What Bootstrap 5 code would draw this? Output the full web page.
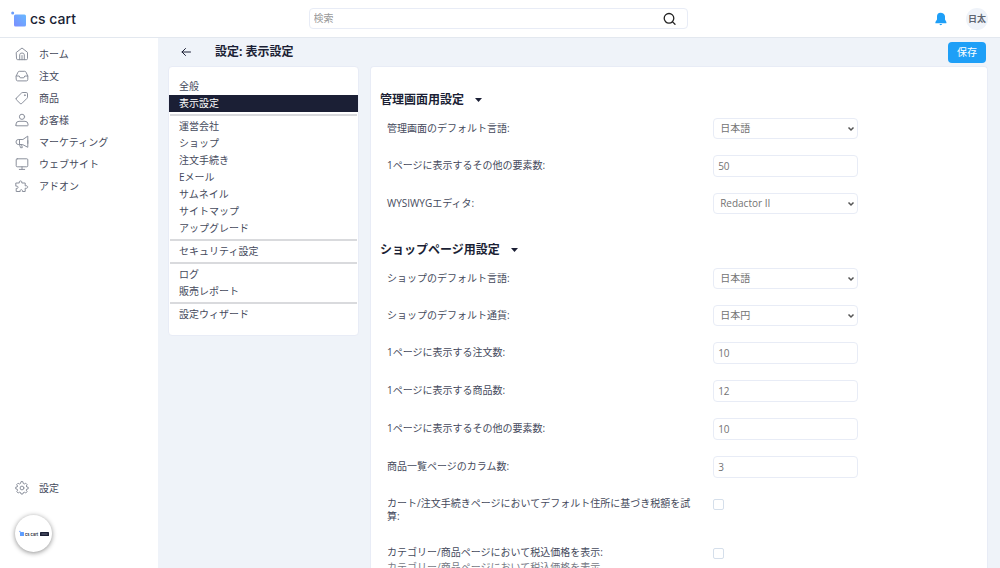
<!DOCTYPE html>
<html lang="ja">
<head>
<meta charset="utf-8">
<meta name="viewport" content="width=device-width, initial-scale=1">
<title>設定: 表示設定</title>
<link href="https://cdn.jsdelivr.net/npm/bootstrap@5.3.0/dist/css/bootstrap.min.css" rel="stylesheet">
<style>
  :root { --ink: #1b1f35; --line: #e8ecf6; --page: #eff3f9; --blue: #1e9ff7; }
  body { font-family: "Open Sans", "Noto Sans CJK JP", sans-serif; font-size: 10px; line-height: 13px; color: #454a5c; background: var(--page); }
  a { color: inherit; text-decoration: none; }
  .topbar { height: 38px; border-bottom: 1px solid #e3e8ef; padding: 0 12px 0 8px; }
  .topbar-side { flex: 1 1 0; }
  .brand { gap: 4px; padding: 3px 0 0 3px; }
  .brand-text { font-family: Inter, sans-serif; font-size: 14px; line-height: 16px; font-weight: 500; color: var(--ink); }
  .search-box { flex: 0 1 379px; height: 21px; border: 1px solid var(--line); border-radius: 4px; background: #fff; }
  .search-box input { outline: 0; color: #555; padding: 0 4px; }
  .search-box input::placeholder { color: #999; }
  .bell { margin-right: 13px; }
  .avatar { width: 22px; height: 22px; background: var(--page); color: #5f6672; font-size: 9px; font-weight: 700; }
  .sidebar { width: 158px; padding: 5px 0 16px 15px; }
  .side-link { height: 22px; gap: 10px; }
  .side-link svg { width: 14px; height: 14px; fill: none; stroke: #8b909c; stroke-width: 1; stroke-linecap: round; stroke-linejoin: round; }
  .help-bubble { width: 37px; height: 37px; box-shadow: 0 1px 5px rgba(0,0,0,.45); margin-top: 16px; }
  .work { padding: 0 12px 0 10px; }
  .toolbar { height: 28px; flex: none; }
  .page-title { font-size: 12px; line-height: 16px; font-weight: 700; color: var(--ink); margin: 0 0 0 23px; }
  .save-btn { height: 21px; width: 38px; font-size: 10px; line-height: 13px; padding: 0; background: var(--blue); color: #fff; border-radius: 4px; margin-right: 2px; }
  .save-btn:hover { background: #1389dd; color: #fff; }
  .panel { background: #fff; border: 1px solid var(--line); border-radius: 4px; }
  .settings-nav { width: 191px; padding: 11px 0 12px; }
  .settings-nav a { display: block; height: 17px; line-height: 17px; padding: 0 10px; }
  .settings-nav a.current { background: var(--ink); color: #fff; }
  .settings-nav hr { margin: 2px 1px; border: 0; height: 2px; background: #d9dadd; opacity: 1; }
  .options { padding: 25px 7px 0 9px; margin-left: 11px; border-radius: 4px 4px 0 0; }
  .group-title { font-size: 12px; line-height: 16px; font-weight: 700; color: var(--ink); margin: 0; }
  .group-title button { font: inherit; color: inherit; background: none; border: 0; padding: 0; gap: 11px; }
  .fields { display: grid; gap: 16px; padding: 10px 0 0 7px; margin-bottom: 28px; }
  .field-row { display: flex; align-items: flex-start; }
  .field-row label { width: 55%; padding: 4px 16px 0 0; }
  .field-row small { font-size: 10px; display: block; color: #777b86; line-height: 15px; margin-top: 1px; }
  .ctl { width: 145px; border: 1px solid var(--line); border-radius: 4px; background: #fff; color: #737373; font-size: 10px; line-height: 13px; }
  input.ctl { height: 22px; padding: 0 4px; }
  select.ctl { height: 21px; padding: 0 14px 0 6px; appearance: none; background: #fff url("data:image/svg+xml,%3Csvg xmlns='http://www.w3.org/2000/svg' viewBox='0 0 8 6'%3E%3Cpath d='M1.500 1.500 4 4 6.500 1.500' fill='none' stroke='%23555' stroke-width='1.500'/%3E%3C/svg%3E") no-repeat right 2px center / 8px 6px; }
  .field-row.checks { padding-bottom: 4px; }
  .field-row.checks label { padding-top: 3px; }
  .field-row .form-check-input { width: 11px; height: 11px; margin: 5px 0 0; border-color: #d5dfeb; border-radius: 2px; }
</style>
</head>
<body class="vh-100 d-flex flex-column overflow-hidden">
<header class="topbar bg-white d-flex align-items-center flex-shrink-0">
  <div class="topbar-side">
    <a href="#" class="brand d-inline-flex align-items-center">
      <svg width="15" height="16" viewBox="0 0 15 16" aria-hidden="true">
        <defs><linearGradient id="logoFill" x1="1" y1="0" x2="0" y2="1"><stop offset="0" stop-color="#67b9ff"/><stop offset="1" stop-color="#7b8dff"/></linearGradient></defs>
        <rect x="3" y="3.5" width="12" height="12" rx="1.5" fill="url(#logoFill)"/><circle cx="1.7" cy="2" r="1.5" fill="#6a9dfb"/>
      </svg>
      <span class="brand-text">cs cart</span>
    </a>
  </div>
  <form class="search-box d-flex align-items-center">
    <input type="search" class="border-0 bg-transparent flex-grow-1" placeholder="検索" aria-label="検索">
    <button type="submit" class="border-0 bg-transparent p-0 me-2 d-flex" aria-label="検索する">
      <svg width="18" height="14" viewBox="0 0 18 14" fill="none" stroke="#222" stroke-width="1.3" stroke-linecap="round"><circle cx="8" cy="6.3" r="4.800"/><path d="M11.600 9.900 14 12.200"/></svg>
    </button>
  </form>
  <div class="topbar-side d-flex justify-content-end align-items-center">
    <button type="button" class="bell border-0 bg-transparent p-0 d-flex" aria-label="通知">
      <svg width="16" height="14" viewBox="0 0 16 14" fill="#1e9ff7"><path d="M7.500.8C5.200.8 4 2.400 4 4.500v3L2.400 10v1.200h11V10L12 7.500v-3C12 2.400 9.800.8 7.500.8ZM6.500 12c.2 1.500 2.300 1.500 2.600 0Z"/></svg>
    </button>
    <a href="#" class="avatar rounded-circle d-flex align-items-center justify-content-center ms-1 text-nowrap">日太</a>
  </div>
</header>

<div class="d-flex flex-grow-1 overflow-hidden">
  <nav class="sidebar bg-white d-flex flex-column flex-shrink-0" aria-label="メイン">
    <a href="#" class="side-link d-flex align-items-center"><svg viewBox="0 0 14 14"><path d="M1.500 5.300 7 1l5.500 4.300v6.200q0 1.200-1.200 1.200H2.700q-1.200 0-1.200-1.200ZM4.700 12.700V7.800Q4.700 6 7 6t2.300 1.800v4.900M7 8.500v4.200"/></svg>ホーム</a>
    <a href="#" class="side-link d-flex align-items-center"><svg viewBox="0 0 14 14"><path d="M1.200 7 3 3.200Q3.400 2.300 4.300 2.300h5.400q.9 0 1.300.9L12.800 7v3.500q0 1.400-1.400 1.400H2.600q-1.400 0-1.400-1.400ZM1.200 7h3l1 1.800h3.600l1-1.800h3"/></svg>注文</a>
    <a href="#" class="side-link d-flex align-items-center"><svg viewBox="0 0 14 14"><path d="M1.300 7.200 6.500 2Q7 1.500 8 1.500h3.200q1.300 0 1.300 1.300V6q0 .8-.6 1.400l-5.100 5.100q-.8.700-1.600 0L1.300 8.700q-.7-.8 0-1.500Z"/><circle cx="9.800" cy="4.200" r=".4"/></svg>商品</a>
    <a href="#" class="side-link d-flex align-items-center"><svg viewBox="0 0 14 14"><circle cx="7" cy="3.800" r="2.600"/><path d="M1 12.300V11Q1.200 8.300 4 8.300h6q2.800 0 3 2.700v1.300q0 .5-.5.500h-11q-.5 0-.5-.5Z"/></svg>お客様</a>
    <a href="#" class="side-link d-flex align-items-center"><svg viewBox="0 0 14 14"><path d="M12.800 1.500v10.800L7.500 9.500H3.200Q1 9.300 1 7t2.200-2.500h4.300ZM4.500 4.500v5l1 3.200h1.800l-.7-3.200M12.800 5.700v2.600"/></svg>マーケティング</a>
    <a href="#" class="side-link d-flex align-items-center"><svg viewBox="0 0 14 14"><rect x="1.200" y="1.800" width="11.600" height="8" rx="1"/><path d="M7 9.800v2.500M4.300 12.400h5.400"/></svg>ウェブサイト</a>
    <a href="#" class="side-link d-flex align-items-center"><svg viewBox="0 0 14 14"><path d="M1.200 4h3.100c-1-2.600 3.400-2.900 2.500 0h3.400v2.900c3.200-1.100 3.500 3.200 0 2.300v3.300H7.400c.6-2.500-2.800-2.500-2.200 0h-4V9.400c2.600.6 2.600-2.900 0-2.300Z"/></svg>アドオン</a>
    <a href="#" class="side-link d-flex align-items-center mt-auto"><svg viewBox="0 0 14 14"><circle cx="7" cy="7" r="1.900"/><path d="m5.900 1-.4 1.500-1 .5-1.400-.8-1.400 1.400.8 1.400-.4 1L.7 6.200v1.600l1.500.4.400 1-.8 1.400 1.400 1.400 1.400-.8 1 .4.400 1.400h1.900l.4-1.400 1-.4 1.400.8 1.400-1.400-.8-1.400.4-1 1.500-.4V6.200L11.800 6l-.5-1 .8-1.400-1.400-1.400-1.400.8-1-.5L7.900 1Z"/></svg>設定</a>
    <button type="button" class="help-bubble rounded-circle border-0 bg-white p-0 d-flex align-items-center justify-content-center" aria-label="ヘルプ">
      <svg width="30" height="8" viewBox="0 0 30 8"><circle cx=".9" cy="1.500" r=".7" fill="#6a9dfb"/><rect x="1" y="2" width="4" height="4" rx=".5" fill="#5d9dff"/><text x="6" y="5.800" font-family="Inter, sans-serif" font-size="4" font-weight="600" fill="#1b1f35">cs cart</text><rect x="21" y="2" width="9" height="4" rx=".6" fill="#1b1f35"/><path d="M22.500 4h6" stroke="#777b8d" stroke-width=".8"/></svg>
    </button>
  </nav>

  <main class="work d-flex flex-column flex-grow-1">
    <div class="toolbar d-flex align-items-center">
      <a href="#" class="d-flex ms-2 ps-1" aria-label="戻る"><svg width="12" height="10" viewBox="0 0 12 10" fill="none" stroke="#1b1f35" stroke-width="1" stroke-linecap="round" stroke-linejoin="round"><path d="M10.500 5H2M5.500 1.500 2 5l3.500 3.500"/></svg></a>
      <h1 class="page-title">設定: 表示設定</h1>
      <button type="button" class="btn save-btn ms-auto border-0">保存</button>
    </div>
    <div class="d-flex flex-grow-1 align-items-start">
      <nav class="panel settings-nav flex-shrink-0" aria-label="設定">
        <a href="#">全般</a>
        <a href="#" class="current" aria-current="page">表示設定</a>
        <hr>
        <a href="#">運営会社</a>
        <a href="#">ショップ</a>
        <a href="#">注文手続き</a>
        <a href="#">Eメール</a>
        <a href="#">サムネイル</a>
        <a href="#">サイトマップ</a>
        <a href="#">アップグレード</a>
        <hr>
        <a href="#">セキュリティ設定</a>
        <hr>
        <a href="#">ログ</a>
        <a href="#">販売レポート</a>
        <hr>
        <a href="#">設定ウィザード</a>
      </nav>
      <form class="panel options flex-grow-1 align-self-stretch border-bottom-0">
        <h2 class="group-title"><button type="button" class="d-flex align-items-center">管理画面用設定 <svg width="7" height="4" viewBox="0 0 7 4"><path d="M0 0h7L3.500 4Z" fill="#1b1f35"/></svg></button></h2>
        <div class="fields">
          <div class="field-row"><label for="adminLang">管理画面のデフォルト言語:</label><select id="adminLang" class="ctl"><option>日本語</option></select></div>
          <div class="field-row"><label for="adminItems">1ページに表示するその他の要素数:</label><input id="adminItems" class="ctl" type="text" value="50"></div>
          <div class="field-row"><label for="editor">WYSIWYGエディタ:</label><select id="editor" class="ctl"><option>Redactor II</option></select></div>
        </div>
        <h2 class="group-title"><button type="button" class="d-flex align-items-center">ショップページ用設定 <svg width="7" height="4" viewBox="0 0 7 4"><path d="M0 0h7L3.500 4Z" fill="#1b1f35"/></svg></button></h2>
        <div class="fields">
          <div class="field-row"><label for="shopLang">ショップのデフォルト言語:</label><select id="shopLang" class="ctl"><option>日本語</option></select></div>
          <div class="field-row"><label for="currency">ショップのデフォルト通貨:</label><select id="currency" class="ctl"><option>日本円</option></select></div>
          <div class="field-row"><label for="orders">1ページに表示する注文数:</label><input id="orders" class="ctl" type="text" value="10"></div>
          <div class="field-row"><label for="products">1ページに表示する商品数:</label><input id="products" class="ctl" type="text" value="12"></div>
          <div class="field-row"><label for="shopItems">1ページに表示するその他の要素数:</label><input id="shopItems" class="ctl" type="text" value="10"></div>
          <div class="field-row"><label for="columns">商品一覧ページのカラム数:</label><input id="columns" class="ctl" type="text" value="3"></div>
          <div class="field-row checks"><label for="estTax">カート/注文手続きページにおいてデフォルト住所に基づき税額を試算:</label><input id="estTax" class="form-check-input" type="checkbox"></div>
          <div class="field-row checks"><label for="taxPrice">カテゴリー/商品ページにおいて税込価格を表示:<small>カテゴリー/商品ページにおいて税込価格を表示</small></label><input id="taxPrice" class="form-check-input" type="checkbox"></div>
        </div>
      </form>
    </div>
  </main>
</div>
<script src="https://cdn.jsdelivr.net/npm/bootstrap@5.3.0/dist/js/bootstrap.bundle.min.js"></script>
</body>
</html>
